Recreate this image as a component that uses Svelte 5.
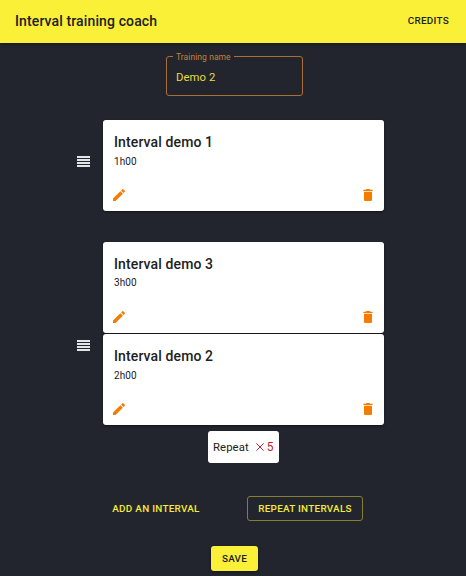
<script>
  const groups = [
    { items: [{ name: 'Interval demo 1', time: '1h00' }], repeat: 0 },
    {
      items: [
        { name: 'Interval demo 3', time: '3h00' },
        { name: 'Interval demo 2', time: '2h00' }
      ],
      repeat: 5
    }
  ];
</script>

<div class="app">
  <header>
    <h1>Interval training coach</h1>
    <button class="credits">CREDITS</button>
  </header>

  <main>
    <fieldset>
      <legend>Training name</legend>
      <div class="value">Demo 2</div>
    </fieldset>

    {#each groups as group}
      <section class="group" class:repeated={group.repeat}>
        <svg class="handle" viewBox="0 0 14 11" shape-rendering="crispEdges">
          <path d="M1 0h13v2H1zM1 3h13v2H1zM1 6h13v2H1zM1 9h13v2H1z" fill="#e4e5e7" />
        </svg>
        <div class="stack">
          {#each group.items as item}
            <article>
              <h2>{item.name}</h2>
              <p>{item.time}</p>
              <div class="actions">
                <svg viewBox="0 0 24 24">
                  <path d="M3 17.25V21h3.75L17.81 9.94l-3.75-3.75L3 17.25zM20.71 7.04c.39-.39.39-1.02 0-1.41l-2.34-2.34a.9959.9959 0 0 0-1.41 0l-1.83 1.83 3.75 3.75 1.83-1.83z" />
                </svg>
                <svg viewBox="0 0 24 24">
                  <path d="M6 19c0 1.1.9 2 2 2h8c1.1 0 2-.9 2-2V7H6v12zM19 4h-3.500l-1-1h-5l-1 1H5v2h14V4z" />
                </svg>
              </div>
            </article>
          {/each}
        </div>
      </section>
      {#if group.repeat}
        <div class="repeat">
          <span>Repeat</span>
          <svg viewBox="0 0 8 8"><path d="M.4.4l7.200 7.200M7.600.4L.4 7.600" /></svg>
          <span class="count">{group.repeat}</span>
        </div>
      {/if}
    {/each}

    <div class="buttons">
      <button class="add">ADD AN INTERVAL</button>
      <button class="outlined">REPEAT INTERVALS</button>
    </div>
    <button class="save">SAVE</button>
  </main>
</div>

<style>
  :global(body) {
    background: #22252d;
    overflow: hidden;
  }
  .app {
    box-sizing: border-box;
    width: 466px;
    height: 576px;
    overflow: hidden;
    background: #22252d;
    font-family: Roboto, 'Liberation Sans', sans-serif;
    color: #212121;
  }
  header {
    box-sizing: border-box;
    height: 42.500px;
    padding: 0 17px 1px 15px;
    display: flex;
    align-items: center;
    justify-content: space-between;
    background: #fbf038;
    box-shadow: 0 1px 3px rgba(0, 0, 0, 0.4);
  }
  h1, h2, p {
    margin: 0;
  }
  h1 {
    font-size: 14px;
    font-weight: 500;
    letter-spacing: 0.12px;
  }
  button {
    box-sizing: border-box;
    margin: 0;
    padding: 0;
    border: 0;
    background: none;
    font: 500 9.9px Roboto, sans-serif;
    letter-spacing: 0.28px;
    color: #212121;
  }
  main {
    display: flex;
    flex-direction: column;
    align-items: center;
  }
  fieldset {
    box-sizing: border-box;
    width: 137px;
    height: 45px;
    margin: 8.500px 0 0 3px;
    padding: 0 9px;
    border: 1px solid #a96f35;
    border-radius: 3px;
  }
  legend {
    height: 11px;
    margin-left: -3px;
    padding: 0 3px;
    font-size: 8.500px;
    line-height: 12px;
    letter-spacing: 0.07px;
    color: #c4803c;
  }
  .value {
    margin-top: 8px;
    font-size: 11.3px;
    line-height: 16px;
    letter-spacing: 0.1px;
    color: #e6dd3c;
  }
  .group {
    align-self: stretch;
    display: flex;
    align-items: center;
    margin-top: 24px;
    padding-left: 76px;
  }
  .group ~ .group {
    margin-top: 31px;
  }
  .handle {
    width: 14px;
    height: 11px;
    margin: -8px 13px 0 0;
  }
  .repeated .handle {
    margin-top: 24px;
  }
  .stack {
    display: flex;
    flex-direction: column;
    gap: 1.500px;
  }
  article {
    box-sizing: border-box;
    width: 281px;
    height: 90.800px;
    padding: 12px 8px 0 11px;
    background: #fff;
    border-radius: 3px;
    box-shadow: 0 1px 2px rgba(0, 0, 0, 0.5);
  }
  h2 {
    font-size: 14px;
    line-height: 20px;
    font-weight: 500;
    letter-spacing: 0.12px;
  }
  p {
    margin-top: 1.500px;
    font-size: 10px;
    line-height: 16px;
    letter-spacing: 0.1px;
  }
  .actions {
    display: flex;
    justify-content: space-between;
    margin: 17.500px 0 0 -3px;
  }
  .actions svg {
    width: 16px;
    height: 16px;
    fill: #f57c00;
  }
  .repeat {
    box-sizing: border-box;
    width: 71px;
    height: 31.500px;
    margin: 6.400px 0 0 21px;
    padding: 0 5px;
    display: flex;
    align-items: center;
    background: #fff;
    border-radius: 3px;
    font-size: 11.3px;
    letter-spacing: 0.1px;
  }
  .repeat svg {
    width: 8px;
    height: 8px;
    margin: 0 3px 0 7px;
    stroke: #c81e32;
    fill: none;
  }
  .count {
    color: #c81e32;
    font-size: 12px;
  }
  .buttons {
    align-self: stretch;
    display: flex;
    align-items: center;
    margin-top: 33.500px;
    padding-left: 112px;
  }
  .add, .outlined {
    color: #f5eb3b;
  }
  .add {
    width: 88px;
    white-space: nowrap;
    margin-right: 47px;
  }
  .outlined {
    width: 116px;
    height: 25px;
    border: 1px solid #84802f;
    border-radius: 3px;
  }
  .save {
    width: 47px;
    height: 25px;
    margin: 24.500px 0 0 3px;
    background: #fbf038;
    border-radius: 3px;
    box-shadow: 0 1px 3px rgba(0, 0, 0, 0.5);
  }
</style>
